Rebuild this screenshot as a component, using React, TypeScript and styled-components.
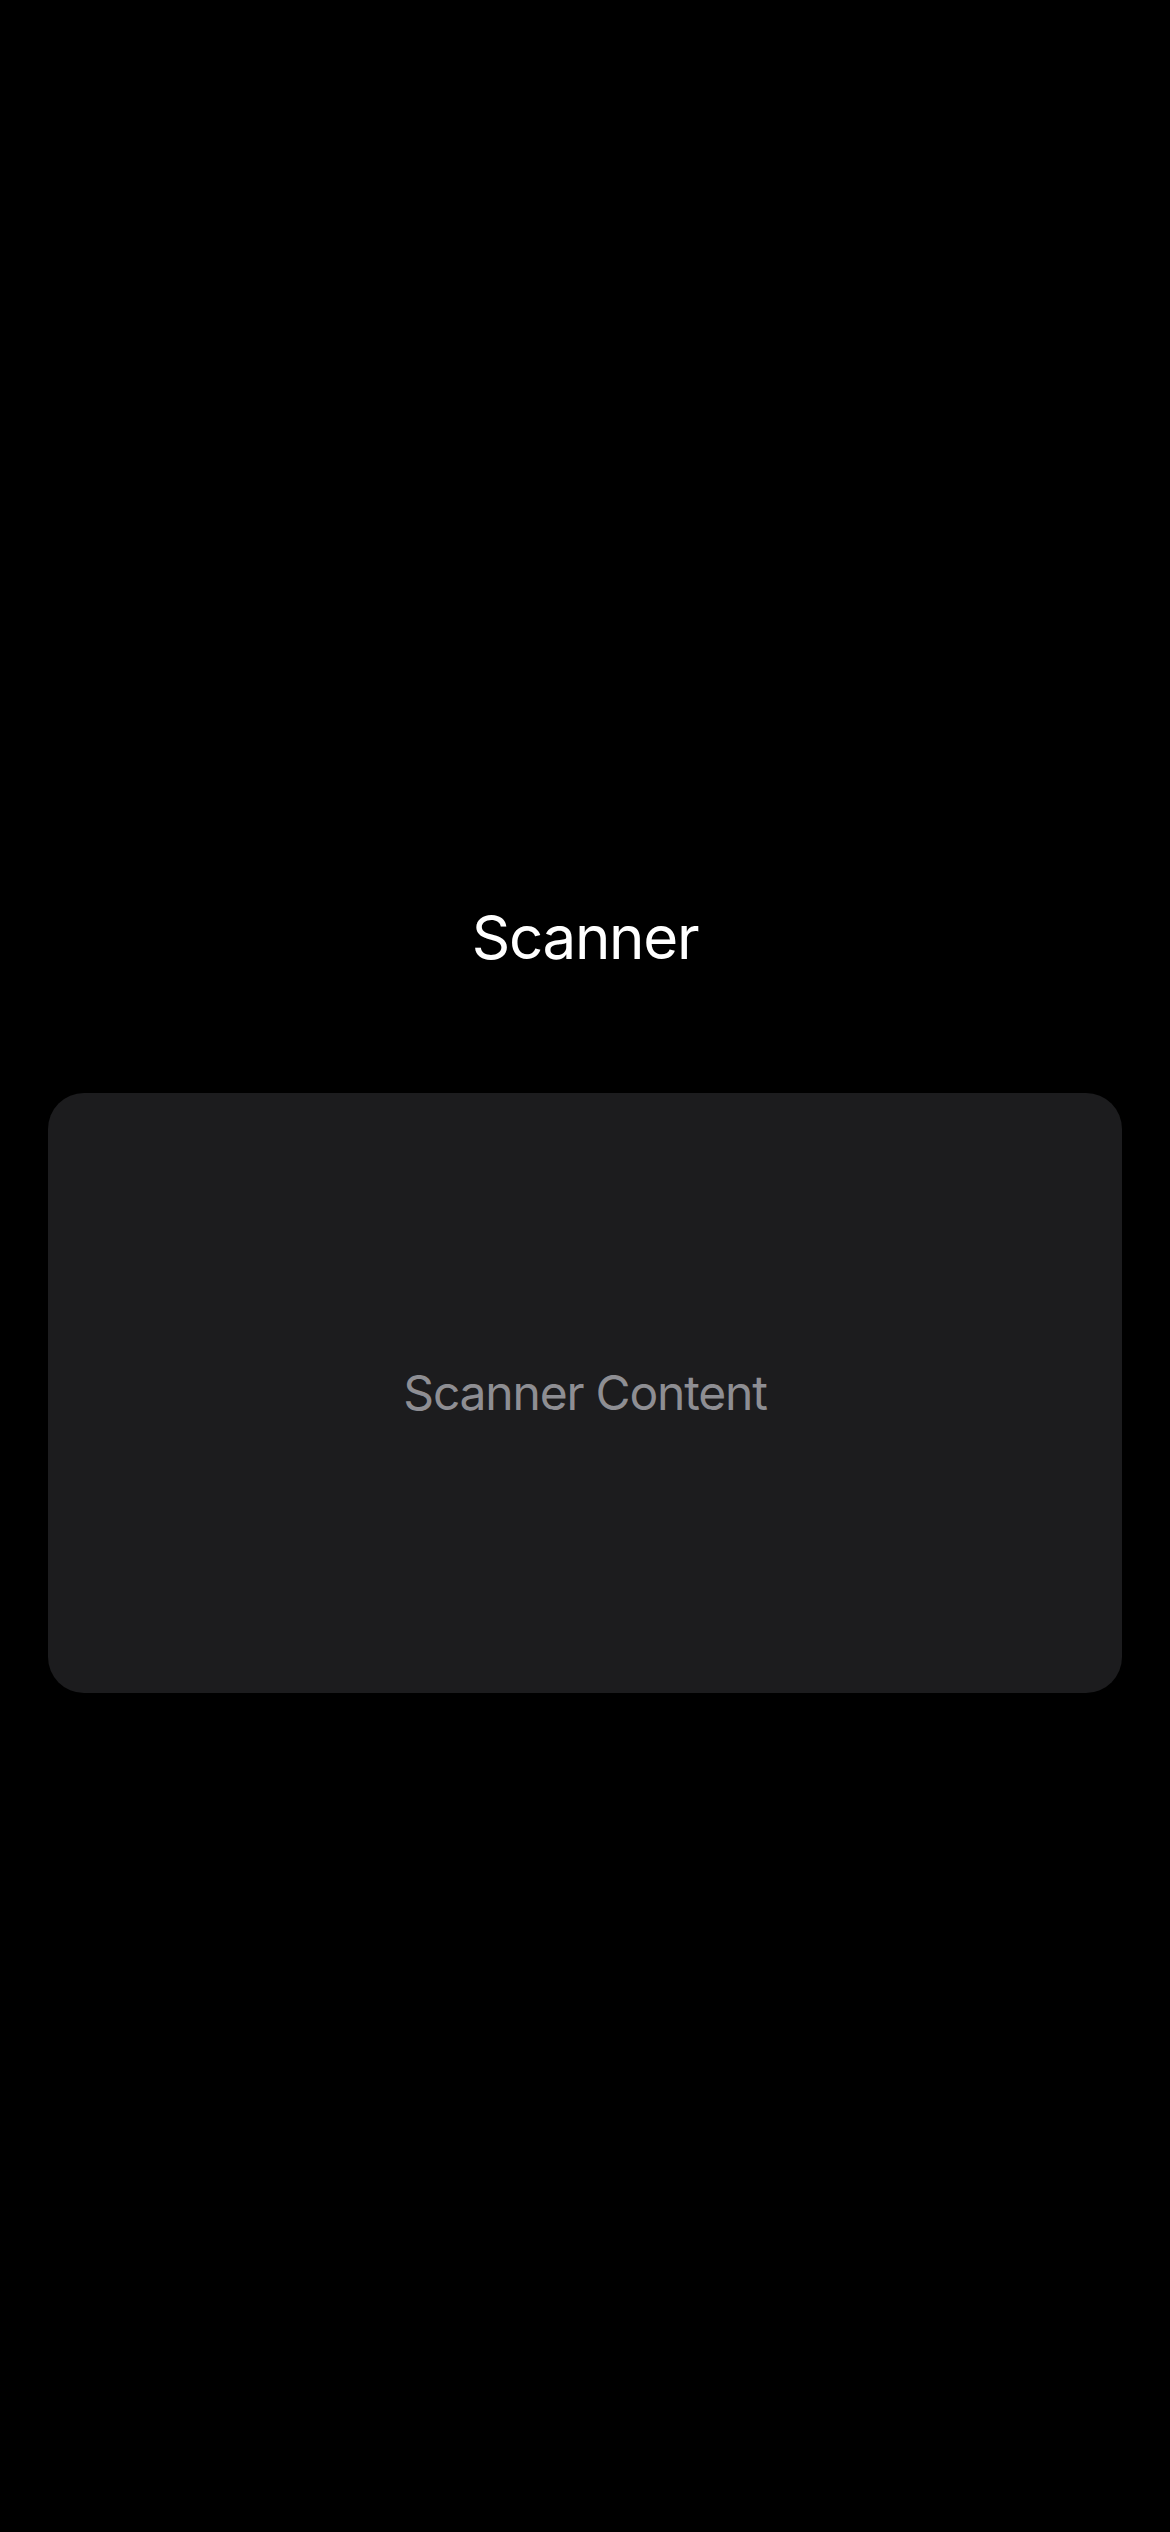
import React from "react";
import styled, { createGlobalStyle } from "styled-components";

const Global = createGlobalStyle`
  html, body { margin: 0; padding: 0; background: #000; }
  body { font-family: Inter, "Noto Sans", "Liberation Sans", sans-serif; }
`;

const Screen = styled.div`
  width: 1170px;
  height: 2532px;
  background: #000;
  display: flex;
  flex-direction: column;
  align-items: center;
  justify-content: center;
`;

const Title = styled.h1`
  margin: 0;
  padding-top: 62px;
  height: 72px;
  line-height: 72px;
  font-size: 60px;
  font-weight: 400;
  color: #ffffff;
  letter-spacing: -1.3px;
`;

const Card = styled.div`
  margin-top: 120px;
  width: 1074px;
  height: 600px;
  border-radius: 36px;
  background: #1c1c1e;
  display: flex;
  align-items: center;
  justify-content: center;
`;

const Placeholder = styled.span`
  font-size: 48px;
  line-height: 58px;
  color: #8e8e93;
  letter-spacing: -1.2px;
`;

export default function App() {
  return (
    <>
      <Global />
      <Screen>
        <Title>Scanner</Title>
        <Card>
          <Placeholder>Scanner Content</Placeholder>
        </Card>
      </Screen>
    </>
  );
}
